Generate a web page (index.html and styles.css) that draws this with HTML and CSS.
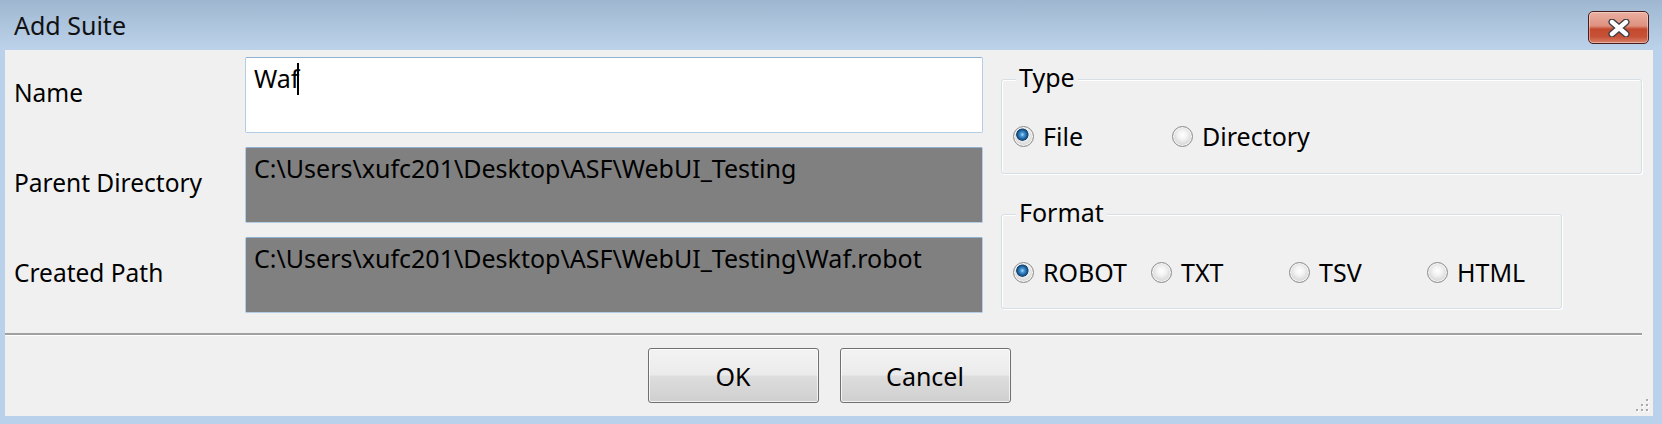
FILE: index.html
```html
<!DOCTYPE html>
<html lang="en">
<head>
<meta charset="utf-8">
<title>Add Suite</title>
<link rel="stylesheet" href="styles.css">
</head>
<body>
<div class="window">
  <div class="titlebar">
    <span class="title">Add Suite</span>
    <button class="close" aria-label="Close">
      <svg width="24" height="18" viewBox="0 0 24 18">
        <path d="M5 3 L19 15 M19 3 L5 15" stroke="#3c3c44" stroke-width="7" stroke-linecap="round" fill="none"/>
        <path d="M5 3 L19 15 M19 3 L5 15" stroke="#ffffff" stroke-width="4.4" stroke-linecap="round" fill="none"/>
      </svg>
    </button>
  </div>
  <div class="client">
    <div class="main">
      <div class="form">
        <div class="label">Name</div>
        <div class="field field-edit"><span>Waf</span><span class="caret"></span></div>
        <div class="label">Parent Directory</div>
        <div class="field field-readonly">C:\Users\xufc201\Desktop\ASF\WebUI_Testing</div>
        <div class="label">Created Path</div>
        <div class="field field-readonly">C:\Users\xufc201\Desktop\ASF\WebUI_Testing\Waf.robot</div>
      </div>
      <div class="groups">
        <fieldset class="group group-type">
          <legend>Type</legend>
          <div class="options options-type">
            <div class="option"><span class="radio checked"></span><span>File</span></div>
            <div class="option"><span class="radio"></span><span>Directory</span></div>
          </div>
        </fieldset>
        <fieldset class="group group-format">
          <legend>Format</legend>
          <div class="options options-format">
            <div class="option"><span class="radio checked"></span><span>ROBOT</span></div>
            <div class="option"><span class="radio"></span><span>TXT</span></div>
            <div class="option"><span class="radio"></span><span>TSV</span></div>
            <div class="option"><span class="radio"></span><span>HTML</span></div>
          </div>
        </fieldset>
      </div>
    </div>
    <div class="separator"></div>
    <div class="buttons">
      <button class="btn">OK</button>
      <button class="btn">Cancel</button>
    </div>
    <div class="grip">
      <svg width="16" height="16" viewBox="0 0 16 16">
        <g fill="#ffffff">
          <rect x="13" y="3" width="2" height="2"/>
          <rect x="8" y="8" width="2" height="2"/><rect x="13" y="8" width="2" height="2"/>
          <rect x="3" y="13" width="2" height="2"/><rect x="8" y="13" width="2" height="2"/><rect x="13" y="13" width="2" height="2"/>
        </g>
        <g fill="#a9a9a9">
          <rect x="12" y="2" width="2" height="2"/>
          <rect x="7" y="7" width="2" height="2"/><rect x="12" y="7" width="2" height="2"/>
          <rect x="2" y="12" width="2" height="2"/><rect x="7" y="12" width="2" height="2"/><rect x="12" y="12" width="2" height="2"/>
        </g>
      </svg>
    </div>
  </div>
</div>
</body>
</html>
```

FILE: styles.css
```css
* {
  box-sizing: border-box;
}

html, body {
  margin: 0;
  padding: 0;
}

body {
  width: 1662px;
  height: 424px;
  overflow: hidden;
  background: #b9d1ea;
  font-family: "Noto Sans", "Open Sans", sans-serif;
  font-size: 25px;
  line-height: 34px;
  color: #000;
}

.window {
  display: flex;
  flex-direction: column;
  height: 424px;
}

.titlebar {
  height: 50px;
  flex: none;
  display: flex;
  align-items: flex-start;
  justify-content: space-between;
  background: linear-gradient(#9fb6d0 0%, #aec5de 50%, #bcd2ea 100%);
}

.title {
  padding: 8px 0 0 14px;
  color: #111;
}

.close {
  width: 61px;
  height: 33px;
  margin: 11px 13px 0 0;
  padding: 0;
  border: 1px solid #4a1d1d;
  border-radius: 5px;
  background: linear-gradient(#eab0a2 0%, #de917f 45%, #c4492e 55%, #c65238 80%, #d8826a 100%);
  box-shadow: inset 0 0 0 1px rgba(255, 235, 230, 0.45);
  display: flex;
  align-items: center;
  justify-content: center;
}

.close svg {
  display: block;
}

.client {
  flex: 1;
  margin: 0 9px 8px 5px;
  background: #f0f0f0;
  position: relative;
  display: flex;
  flex-direction: column;
}

.main {
  display: flex;
  align-items: flex-start;
  padding: 7px 0 20px 0;
  height: 283px;
}

.form {
  display: grid;
  grid-template-columns: 231px 738px;
  grid-auto-rows: 76px;
  row-gap: 14px;
  padding-left: 9px;
}

.label {
  align-self: center;
  padding-bottom: 4px;
  font-size: 24.5px;
  white-space: nowrap;
}

.field {
  border: 1px solid #b4cde7;
  border-top-color: #8fb1d4;
  border-radius: 2px;
  padding: 3px 8px;
  white-space: nowrap;
  overflow: hidden;
}

.field-edit {
  background: #ffffff;
}

.field-readonly {
  background: #808080;
}

.caret {
  display: inline-block;
  width: 2px;
  height: 32px;
  margin: 2px 0 0 -2px;
  vertical-align: top;
  background: #000;
}

.groups {
  margin: 7px 0 0 18px;
  display: flex;
  flex-direction: column;
}

.group {
  margin: 0;
  min-width: 0;
  border: 1px solid #d5dfe5;
  border-radius: 3px;
  box-shadow: inset 1px 1px 0 #ffffff, 1px 1px 0 #ffffff;
}

.group legend {
  margin-left: 3px;
  padding: 0 3px 4px;
  line-height: 26px;
  background: #f0f0f0;
}

.group-type {
  width: 641px;
  padding: 27px 0 22px 11px;
}

.group-format {
  width: 561px;
  margin-top: 25px;
  padding: 28px 0 21px 11px;
}

.options {
  display: grid;
  height: 30px;
}

.options-type {
  grid-template-columns: 159px 159px;
}

.options-format {
  grid-template-columns: 138px 138px 138px auto;
}

.option {
  display: flex;
  align-items: center;
  gap: 9px;
  line-height: 30px;
  white-space: nowrap;
}

.radio {
  flex: none;
  width: 21px;
  height: 21px;
  border-radius: 50%;
  border: 1px solid #8c8c8c;
  background: radial-gradient(circle at 50% 42%, #ffffff 0, #f3f3f3 30%, #d4d4d4 72%, #ececec 100%);
  box-shadow: inset 0 0 0 1px #f6f6f6;
}

.radio.checked {
  background:
    radial-gradient(circle at 44% 40%, #a6dcfa 0, #4596d6 2px, #1d5e98 4.5px, #103f6c 5.8px, rgba(16, 63, 108, 0) 6.5px),
    radial-gradient(circle at 50% 42%, #ffffff 0, #f3f3f3 30%, #d4d4d4 72%, #ececec 100%);
}

.separator {
  height: 3px;
  margin-right: 11px;
  border-top: 2px solid #a0a0a0;
  border-bottom: 1px solid #ffffff;
}

.buttons {
  display: flex;
  justify-content: center;
  gap: 21px;
  padding-top: 12px;
}

.btn {
  width: 171px;
  height: 55px;
  padding: 0;
  font: inherit;
  color: #000;
  border: 1px solid #707070;
  border-radius: 3px;
  background: linear-gradient(#f3f3f3 0%, #ebebeb 48%, #dddddd 52%, #cfcfcf 100%);
  box-shadow: inset 0 0 0 1px rgba(255, 255, 255, 0.7);
  display: flex;
  align-items: center;
  justify-content: center;
}

.grip {
  position: absolute;
  right: 3px;
  bottom: 3px;
  width: 16px;
  height: 16px;
}

.grip svg {
  display: block;
}
```
